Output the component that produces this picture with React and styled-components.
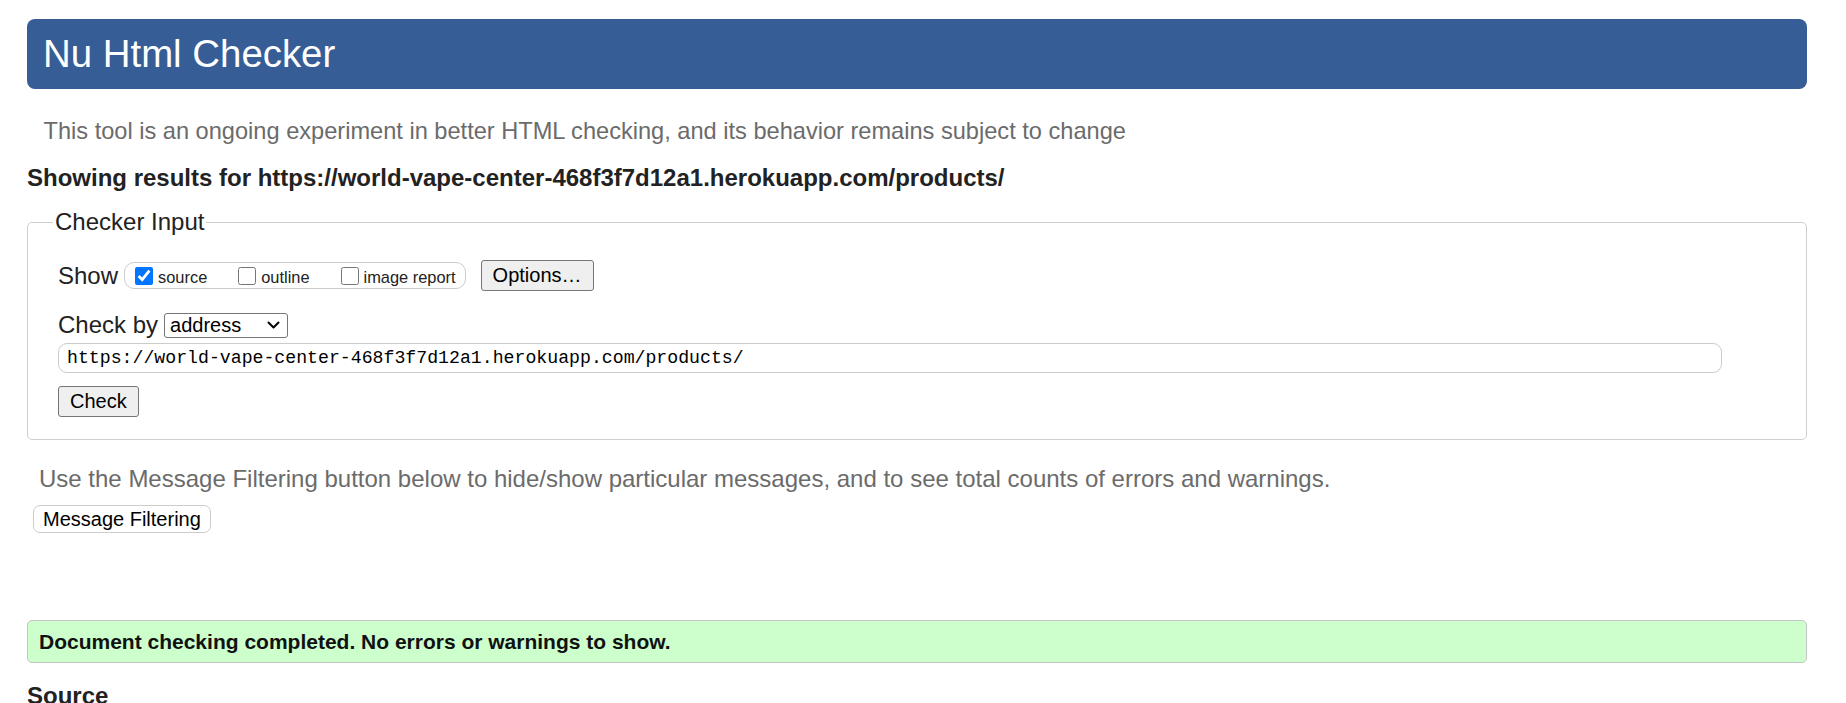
import React from "react";
import styled, { createGlobalStyle } from "styled-components";

const Global = createGlobalStyle`
  html, body { margin: 0; padding: 0; background: #fff; }
  body { font-family: "Liberation Sans", Arial, sans-serif; color: #222; }
  * { box-sizing: border-box; }
`;

const Page = styled.div`
  padding: 0 39px 0 27px;
`;

const Header = styled.h1`
  margin: 19px 0 0;
  height: 70px;
  display: flex;
  align-items: center;
  padding: 0 16px;
  background: #365d95;
  color: #fff;
  font-size: 38.4px;
  font-weight: 400;
  line-height: 1;
  border-radius: 8px;
`;

const About = styled.p`
  margin: 28px 0 0 16.5px;
  font-size: 23.6px;
  line-height: 28px;
  color: #6b6b6b;
`;

const ResultsFor = styled.p`
  margin: 19px 0 0;
  font-size: 24px;
  line-height: 28px;
  font-weight: 700;
  color: #222;
`;

const Fieldset = styled.fieldset`
  margin: 16px 0 0;
  padding: 0 29px 22px 30px;
  border: 1px solid #cfcfcf;
  border-radius: 5px;
  min-width: 0;
`;

const Legend = styled.legend`
  font-size: 24px;
  line-height: 28px;
  padding: 0 2px;
  margin-left: -5px;
  color: #222;
`;

const Row = styled.div`
  display: flex;
  align-items: center;
  height: ${(p) => p.$h}px;
  margin-top: ${(p) => p.$mt}px;
`;

const Label = styled.span`
  font-size: 24px;
  line-height: 28px;
  color: #222;
  margin-right: 6px;
`;

const Group = styled.div`
  display: flex;
  align-items: center;
  gap: 31px;
  height: 27px;
  padding: 0 9px 0 10px;
  border: 1px solid #cccccc;
  border-radius: 10px;
`;

const Option = styled.label`
  display: flex;
  align-items: center;
  gap: 5px;
  font-size: 16.4px;
  color: #222;
  span {
    padding-top: 4px;
  }
`;

const Box = styled.input.attrs({ type: "checkbox" })`
  width: 18px;
  height: 18px;
  margin: 0;
  accent-color: #0075ff;
`;

const Button = styled.button`
  display: block;
  font-family: "Liberation Sans", Arial, sans-serif;
  font-size: 20px;
  color: #000;
  height: ${(p) => p.$h || 31}px;
  padding: 0 ${(p) => (p.$soft ? 9 : 11)}px;
  margin: ${(p) => p.$m || 0};
  background: ${(p) => (p.$soft ? "#fff" : "#efefef")};
  border: 1px solid ${(p) => (p.$soft ? "#cccccc" : "#767676")};
  border-radius: ${(p) => (p.$soft ? "7px" : "3px")};
`;

const SelectBox = styled.div`
  display: flex;
  align-items: center;
  justify-content: space-between;
  width: 124px;
  height: 25px;
  padding: 0 7px 0 5px;
  border: 1px solid #767676;
  border-radius: 3px;
  background: #fff;
  select {
    appearance: none;
    border: none;
    background: transparent;
    font-family: "Liberation Sans", Arial, sans-serif;
    font-size: 20px;
    color: #000;
    padding: 0;
    outline: none;
  }
`;

const UrlInput = styled.input`
  display: block;
  width: 1664px;
  height: 30px;
  margin-top: 4px;
  padding: 0 8px;
  border: 1px solid #cccccc;
  border-radius: 9px;
  font-family: "Liberation Mono", "DejaVu Sans Mono", monospace;
  font-size: 18.2px;
  color: #000;
`;

const Hint = styled.p`
  margin: 25px 0 0 12px;
  font-size: 24px;
  line-height: 28px;
  color: #6b6b6b;
`;

const Success = styled.div`
  margin-top: 87px;
  height: 43px;
  display: flex;
  align-items: center;
  padding-left: 11px;
  background: #ccffcc;
  border: 1px solid #c4c4c4;
  border-radius: 5px;
  font-size: 21px;
  font-weight: 700;
  color: #111;
`;

const SourceTitle = styled.h2`
  margin: 19px 0 0;
  font-size: 24px;
  line-height: 28px;
  font-weight: 700;
  color: #222;
`;

const Chevron = () => (
  <svg width="13" height="9" viewBox="0 0 13 9" fill="none">
    <path d="M1.5 1.5 L6.5 6.5 L11.5 1.5" stroke="#000" strokeWidth="2" strokeLinecap="round" strokeLinejoin="round" />
  </svg>
);

export default function App() {
  return (
    <Page>
      <Global />
      <Header>Nu Html Checker</Header>
      <About>
        This tool is an ongoing experiment in better HTML checking, and its behavior remains subject to change
      </About>
      <ResultsFor>Showing results for https://world-vape-center-468f3f7d12a1.herokuapp.com/products/</ResultsFor>
      <Fieldset>
        <Legend>Checker Input</Legend>
        <Row $h={31} $mt={24}>
          <Label>Show</Label>
          <Group>
            <Option>
              <Box defaultChecked />
              <span>source</span>
            </Option>
            <Option>
              <Box />
              <span>outline</span>
            </Option>
            <Option>
              <Box />
              <span>image report</span>
            </Option>
          </Group>
          <Button $m="0 0 0 15px">Options…</Button>
        </Row>
        <Row $h={28} $mt={20}>
          <Label>Check by</Label>
          <SelectBox>
            <select defaultValue="address">
              <option value="address">address</option>
              <option value="file">file upload</option>
              <option value="text">text input</option>
            </select>
            <Chevron />
          </SelectBox>
        </Row>
        <UrlInput defaultValue="https://world-vape-center-468f3f7d12a1.herokuapp.com/products/" />
        <Button $m="13px 0 0 0">Check</Button>
      </Fieldset>
      <Hint>
        Use the Message Filtering button below to hide/show particular messages, and to see total counts of errors and warnings.
      </Hint>
      <Button $soft $h={28} $m="12px 0 0 6px">Message Filtering</Button>
      <Success>Document checking completed. No errors or warnings to show.</Success>
      <SourceTitle>Source</SourceTitle>
    </Page>
  );
}
